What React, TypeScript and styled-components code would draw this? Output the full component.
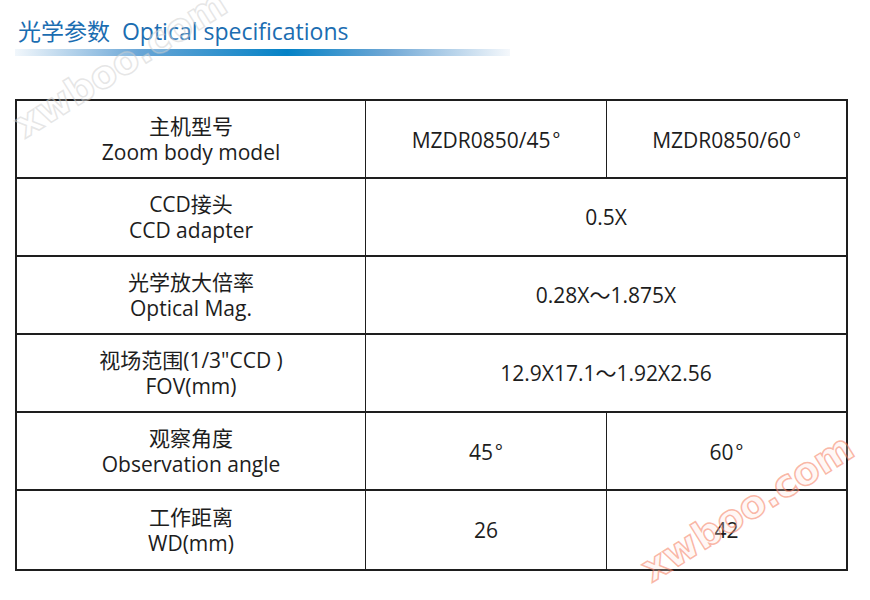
import React from "react";
import styled, { createGlobalStyle } from "styled-components";

const Global = createGlobalStyle`
  html, body { margin: 0; padding: 0; background: #fff; }
  body { width: 870px; height: 600px; overflow: hidden; }
`;

const Page = styled.div`
  position: relative;
  width: 870px;
  height: 600px;
  overflow: hidden;
  box-sizing: border-box;
  padding: 17px 0 0 15px;
  font-family: "Open Sans", "Noto Sans CJK SC", sans-serif;
  color: #1d1d1d;
`;

const Title = styled.h1`
  margin: 0 0 0 3px;
  font-size: 23px;
  font-weight: 400;
  line-height: 29px;
  color: #1b6db1;
  letter-spacing: 0;
`;

const Bar = styled.div`
  margin-top: 3px;
  width: 495px;
  height: 7px;
  background: linear-gradient(
    to right,
    rgba(210, 228, 243, 0.3) 0%,
    #6aa6d6 25%,
    #0482c6 55%,
    #6ea7d5 75%,
    rgba(230, 238, 247, 0.4) 100%
  );
`;

const Table = styled.div`
  margin-top: 43px;
  width: 833px;
  box-sizing: border-box;
  border: 2px solid #1e1e1e;
  display: grid;
  grid-template-columns: 349px 241px 1fr;
`;

const Cell = styled.div<{ $span?: number; $last?: boolean; $right?: boolean }>`
  grid-column: span ${(p) => p.$span ?? 1};
  height: 78px;
  box-sizing: border-box;
  border-bottom: ${(p) => (p.$last ? "none" : "2px solid #1e1e1e")};
  border-right: ${(p) => (p.$right ? "none" : "1px solid #1e1e1e")};
  display: flex;
  flex-direction: column;
  align-items: center;
  justify-content: center;
  font-size: 21px;
  line-height: 26px;
  text-align: center;
  color: #1d1d1d;
`;

const Line = styled.span`
  display: block;
  white-space: pre;
`;

const Deg = styled.span`
  font-family: "Noto Sans CJK SC", sans-serif;
  margin-left: 2px;
`;

const Watermark = styled.div<{ $stroke: string; $fill: string }>`
  position: absolute;
  font-family: "DejaVu Sans", sans-serif;
  font-weight: 700;
  font-size: 38px;
  line-height: 38px;
  color: ${(p) => p.$fill};
  -webkit-text-stroke: 1.5px ${(p) => p.$stroke};
  transform: rotate(-32deg);
  transform-origin: left bottom;
  pointer-events: none;
  white-space: nowrap;
`;

type Row = { label: [string, string]; values: { text: string; span: number }[] };

const rows: Row[] = [
  {
    label: ["主机型号", "Zoom body model"],
    values: [
      { text: "MZDR0850/45°", span: 1 },
      { text: "MZDR0850/60°", span: 1 },
    ],
  },
  { label: ["CCD接头", "CCD adapter"], values: [{ text: "0.5X", span: 2 }] },
  { label: ["光学放大倍率", "Optical Mag."], values: [{ text: "0.28X～1.875X", span: 2 }] },
  {
    label: ["视场范围(1/3\"CCD )", "FOV(mm)"],
    values: [{ text: "12.9X17.1～1.92X2.56", span: 2 }],
  },
  {
    label: ["观察角度", "Observation angle"],
    values: [
      { text: "45°", span: 1 },
      { text: "60°", span: 1 },
    ],
  },
  {
    label: ["工作距离", "WD(mm)"],
    values: [
      { text: "26", span: 1 },
      { text: "42", span: 1 },
    ],
  },
];

function renderValue(text: string) {
  if (text.endsWith("°")) {
    return (
      <>
        {text.slice(0, -1)}
        <Deg>°</Deg>
      </>
    );
  }
  return text;
}

export default function App() {
  return (
    <Page>
      <Global />
      <Title>光学参数&nbsp; Optical specifications</Title>
      <Bar />
      <Table>
        {rows.map((r, i) => {
          const last = i === rows.length - 1;
          return (
            <React.Fragment key={i}>
              <Cell $last={last}>
                <Line>{r.label[0]}</Line>
                <Line>{r.label[1]}</Line>
              </Cell>
              {r.values.map((v, j) => (
                <Cell
                  key={j}
                  $span={v.span}
                  $last={last}
                  $right={j === r.values.length - 1}
                >
                  <Line>{renderValue(v.text)}</Line>
                </Cell>
              ))}
            </React.Fragment>
          );
        })}
      </Table>
      <Watermark
        $stroke="rgba(205,205,205,0.5)"
        $fill="rgba(255,255,255,0.2)"
        style={{ left: 28, top: 106 }}
      >
        xwboo.com
      </Watermark>
      <Watermark
        $stroke="rgba(245,125,95,0.55)"
        $fill="rgba(255,225,215,0.25)"
        style={{ left: 655, top: 550 }}
      >
        xwboo.com
      </Watermark>
    </Page>
  );
}
